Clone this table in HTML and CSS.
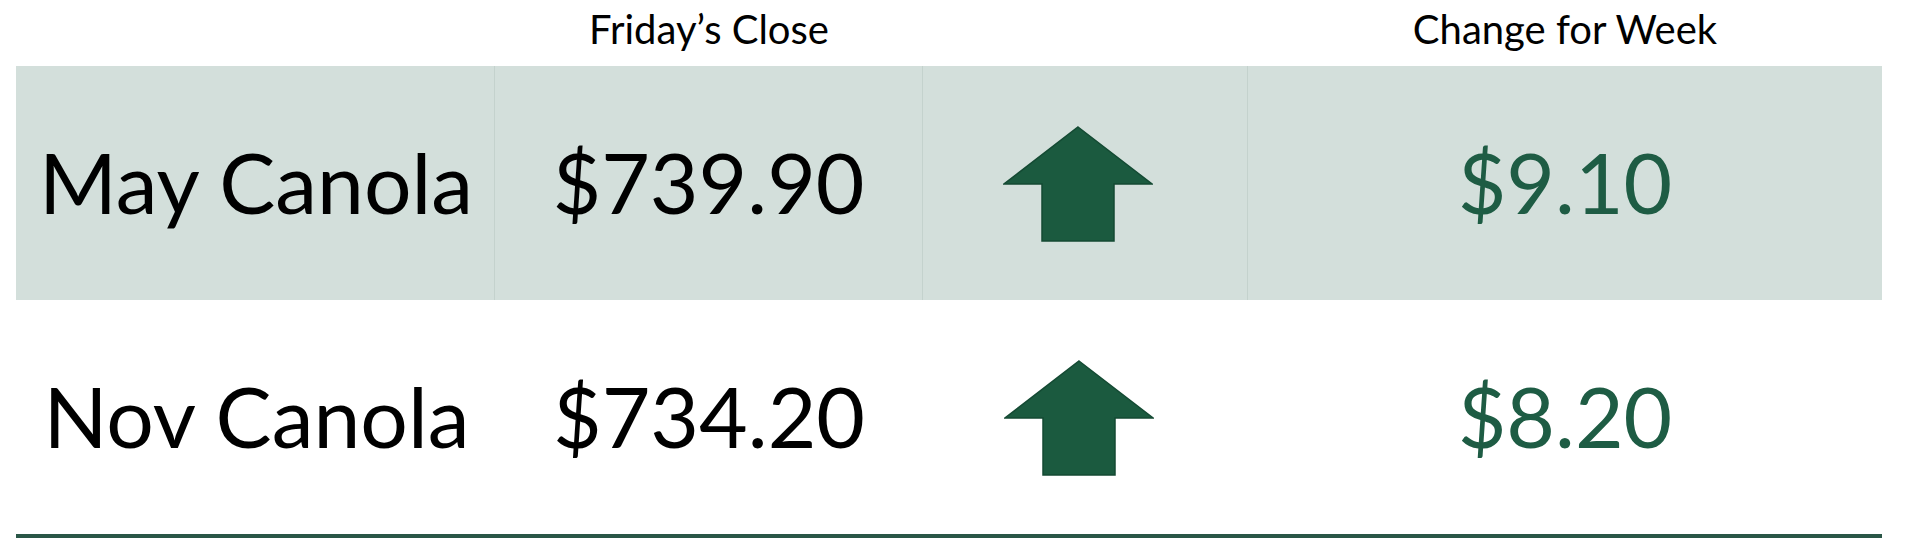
FILE: index.html
```html
<!DOCTYPE html>
<html>
<head>
<meta charset="utf-8">
<link rel="stylesheet" href="styles.css">
</head>
<body>
<div class="board">
  <div class="head"></div>
  <div class="head">Friday’s Close</div>
  <div class="head"></div>
  <div class="head">Change for Week</div>

  <div class="cell shaded name">May Canola</div>
  <div class="cell shaded price">$739.90</div>
  <div class="cell shaded arrow-cell">
    <svg class="arrow" width="150" height="116" viewBox="-1 -1 150 116"><polygon points="74,0 148,57 110,57 110,114 38,114 38,57 0,57"/></svg>
  </div>
  <div class="cell shaded change last">$9.10</div>

  <div class="cell name">Nov Canola</div>
  <div class="cell price">$734.20</div>
  <div class="cell arrow-cell">
    <svg class="arrow" width="150" height="116" viewBox="-1 -1 150 116"><polygon points="74,0 148,57 110,57 110,114 38,114 38,57 0,57"/></svg>
  </div>
  <div class="cell change last">$8.20</div>
</div>
</body>
</html>
```
FILE: styles.css
```css
html, body {
  margin: 0;
  padding: 0;
  background: #ffffff;
}
body {
  font-family: Lato, "Open Sans", sans-serif;
  color: #000;
}
.board {
  margin-left: 16px;
  width: 1866px;
  display: grid;
  grid-template-columns: 479px 428px 325px 634px;
  grid-template-rows: 66px 234px 234px;
  border-bottom: 4px solid #2a5647;
}
.head {
  display: flex;
  align-items: flex-start;
  justify-content: center;
  font-size: 40px;
  padding-top: 5px;
  box-sizing: border-box;
}
.cell {
  display: flex;
  align-items: center;
  justify-content: center;
  font-size: 84px;
  padding-bottom: 3px;
  box-sizing: border-box;
}
.shaded {
  background: #d3dfdb;
  border-right: 1px solid #c4d2cd;
}
.shaded.last {
  border-right: none;
}
.name {
  padding-left: 2px;
}
.change {
  color: #1e5c44;
}
.arrow-cell {
  padding-right: 14px;
  padding-top: 2px;
  padding-bottom: 0;
}
.arrow polygon {
  fill: #1b5a3f;
  stroke: #144a33;
  stroke-width: 1.5;
}
```
